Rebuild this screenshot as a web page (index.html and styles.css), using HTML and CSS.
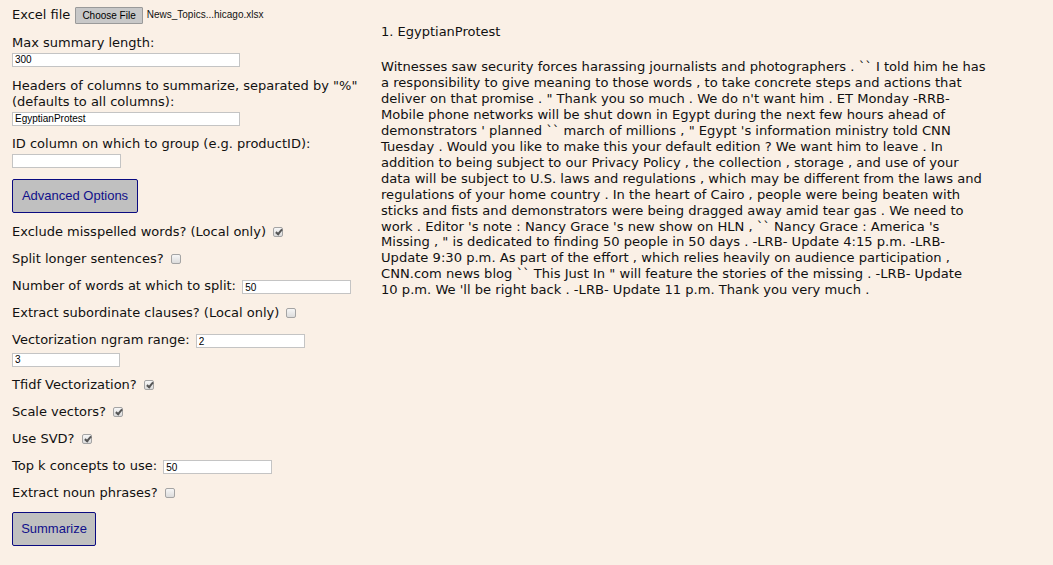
FILE: index.html
```html
<!DOCTYPE html>
<html lang="en">
<head>
<meta charset="utf-8">
<title>Summarizer</title>
<link rel="stylesheet" href="styles.css">
</head>
<body>
<div class="page">
  <form class="form">
    <div class="row file-row">
      <span class="label">Excel file</span>
      <button type="button" class="choose">Choose File</button>
      <span class="filename">News_Topics...hicago.xlsx</span>
    </div>
    <div class="group">
      <label class="label block">Max summary length:</label>
      <input class="text wide" type="text" value="300">
    </div>
    <div class="group">
      <label class="label block">Headers of columns to summarize, separated by "%" (defaults to all columns):</label>
      <input class="text wide" type="text" value="EgyptianProtest">
    </div>
    <div class="group">
      <label class="label block">ID column on which to group (e.g. productID):</label>
      <input class="text narrow" type="text" value="">
    </div>
    <button type="button" class="action adv">Advanced Options</button>
    <div class="row"><span class="label">Exclude misspelled words? (Local only)</span> <input class="check" type="checkbox" checked></div>
    <div class="row"><span class="label">Split longer sentences?</span> <input class="check" type="checkbox"></div>
    <div class="row"><span class="label">Number of words at which to split:</span> <input class="text narrow inline" type="text" value="50"></div>
    <div class="row"><span class="label">Extract subordinate clauses? (Local only)</span> <input class="check" type="checkbox"></div>
    <div class="row"><span class="label">Vectorization ngram range:</span> <input class="text narrow inline" type="text" value="2"><input class="text narrow second" type="text" value="3"></div>
    <div class="row"><span class="label">Tfidf Vectorization?</span> <input class="check" type="checkbox" checked></div>
    <div class="row"><span class="label">Scale vectors?</span> <input class="check" type="checkbox" checked></div>
    <div class="row"><span class="label">Use SVD?</span> <input class="check" type="checkbox" checked></div>
    <div class="row"><span class="label">Top k concepts to use:</span> <input class="text narrow inline" type="text" value="50"></div>
    <div class="row"><span class="label">Extract noun phrases?</span> <input class="check" type="checkbox"></div>
    <button type="button" class="action sum">Summarize</button>
  </form>
  <div class="results">
    <div class="title">1. EgyptianProtest</div>
    <p class="summary">Witnesses saw security forces harassing journalists and photographers . `` I told him he has a responsibility to give meaning to those words , to take concrete steps and actions that deliver on that promise . " Thank you so much . We do n't want him . ET Monday -RRB- Mobile phone networks will be shut down in Egypt during the next few hours ahead of demonstrators ' planned `` march of millions , " Egypt 's information ministry told CNN Tuesday . Would you like to make this your default edition ? We want him to leave . In addition to being subject to our Privacy Policy , the collection , storage , and use of your data will be subject to U.S. laws and regulations , which may be different from the laws and regulations of your home country . In the heart of Cairo , people were being beaten with sticks and fists and demonstrators were being dragged away amid tear gas . We need to work . Editor 's note : Nancy Grace 's new show on HLN , `` Nancy Grace : America 's Missing , " is dedicated to finding 50 people in 50 days . -LRB- Update 4:15&nbsp;p.m. -LRB- Update 9:30&nbsp;p.m. As part of the effort , which relies heavily on audience participation , CNN.com news blog `` This Just In " will feature the stories of the missing . -LRB- Update 10&nbsp;p.m. We 'll be right back . -LRB- Update 11&nbsp;p.m. Thank you very much .</p>
  </div>
</div>
</body>
</html>
```
FILE: styles.css
```css
html, body {
  margin: 0;
  padding: 0;
  background: #faf0e6;
}
body {
  font-family: "DejaVu Sans", Verdana, sans-serif;
  font-size: 13px;
  line-height: 16px;
  color: #111;
}
.page {
  display: flex;
  align-items: flex-start;
  padding: 5px 0 0 12px;
  gap: 14px;
}
.form {
  width: 355px;
  flex: none;
  display: flex;
  flex-direction: column;
  align-items: flex-start;
  gap: 10.8px;
  margin: 0;
}
.row {
  display: block;
  white-space: nowrap;
}
.file-row {
  display: flex;
  align-items: center;
  height: 19px;
}
.label {
  font-family: "DejaVu Sans", Verdana, sans-serif;
}
.label.block {
  display: block;
  white-space: normal;
  margin-bottom: 2px;
}
.group {
  width: 355px;
}
.choose {
  margin: 1px 0 0 5px;
  height: 17px;
  padding: 0 6px;
  font: 10px/15px "Liberation Sans", Arial, sans-serif;
  color: #000;
  background: #c8c8c8;
  border: 1px solid #9a9a9a;
  border-radius: 1px;
}
.filename {
  margin-left: 4px;
  font: 10px/15px "Liberation Sans", Arial, sans-serif;
  color: #111;
}
.text {
  box-sizing: border-box;
  display: block;
  height: 14px;
  margin: 0;
  padding: 0 2px;
  font: 10px/12px "Liberation Sans", Arial, sans-serif;
  color: #000;
  background: #fff;
  border: 1px solid #c4c4c4;
  border-radius: 0;
  outline: none;
}
.wide {
  width: 228px;
}
.narrow {
  width: 109px;
}
.text.inline {
  display: inline-block;
  margin-left: 2px;
  vertical-align: -1px;
}
.text.second {
  margin-top: 4.5px;
  width: 108px;
}
.check {
  -webkit-appearance: none;
  appearance: none;
  position: relative;
  box-sizing: border-box;
  width: 10px;
  height: 10px;
  margin: 0 0 0 3px;
  vertical-align: -1px;
  border: 1px solid #a4a4a4;
  border-radius: 2px;
  background: linear-gradient(#f6f6f6, #dcdcdc);
}
.check:checked::after {
  content: "";
  position: absolute;
  left: 2px;
  top: 0px;
  width: 2px;
  height: 5px;
  border: solid #555;
  border-width: 0 2px 2px 0;
  transform: translate(1px, 0) rotate(40deg);
}
.action {
  box-sizing: border-box;
  height: 34px;
  margin: 0;
  padding: 0 8px;
  white-space: nowrap;
  font: 13px/16px "Liberation Sans", Arial, sans-serif;
  color: #10108a;
  background: #c0c0c0;
  border: 1px solid #0a0a80;
  border-radius: 2px;
}
.adv {
  width: 126px;
}
.sum {
  width: 84px;
}
.results {
  flex: none;
  width: 608px;
  padding-top: 19px;
}
.title {
  font-size: 13px;
  line-height: 16px;
}
.summary {
  margin: 19px 0 0;
  font-size: 13.1px;
  line-height: 15.95px;
}
```
